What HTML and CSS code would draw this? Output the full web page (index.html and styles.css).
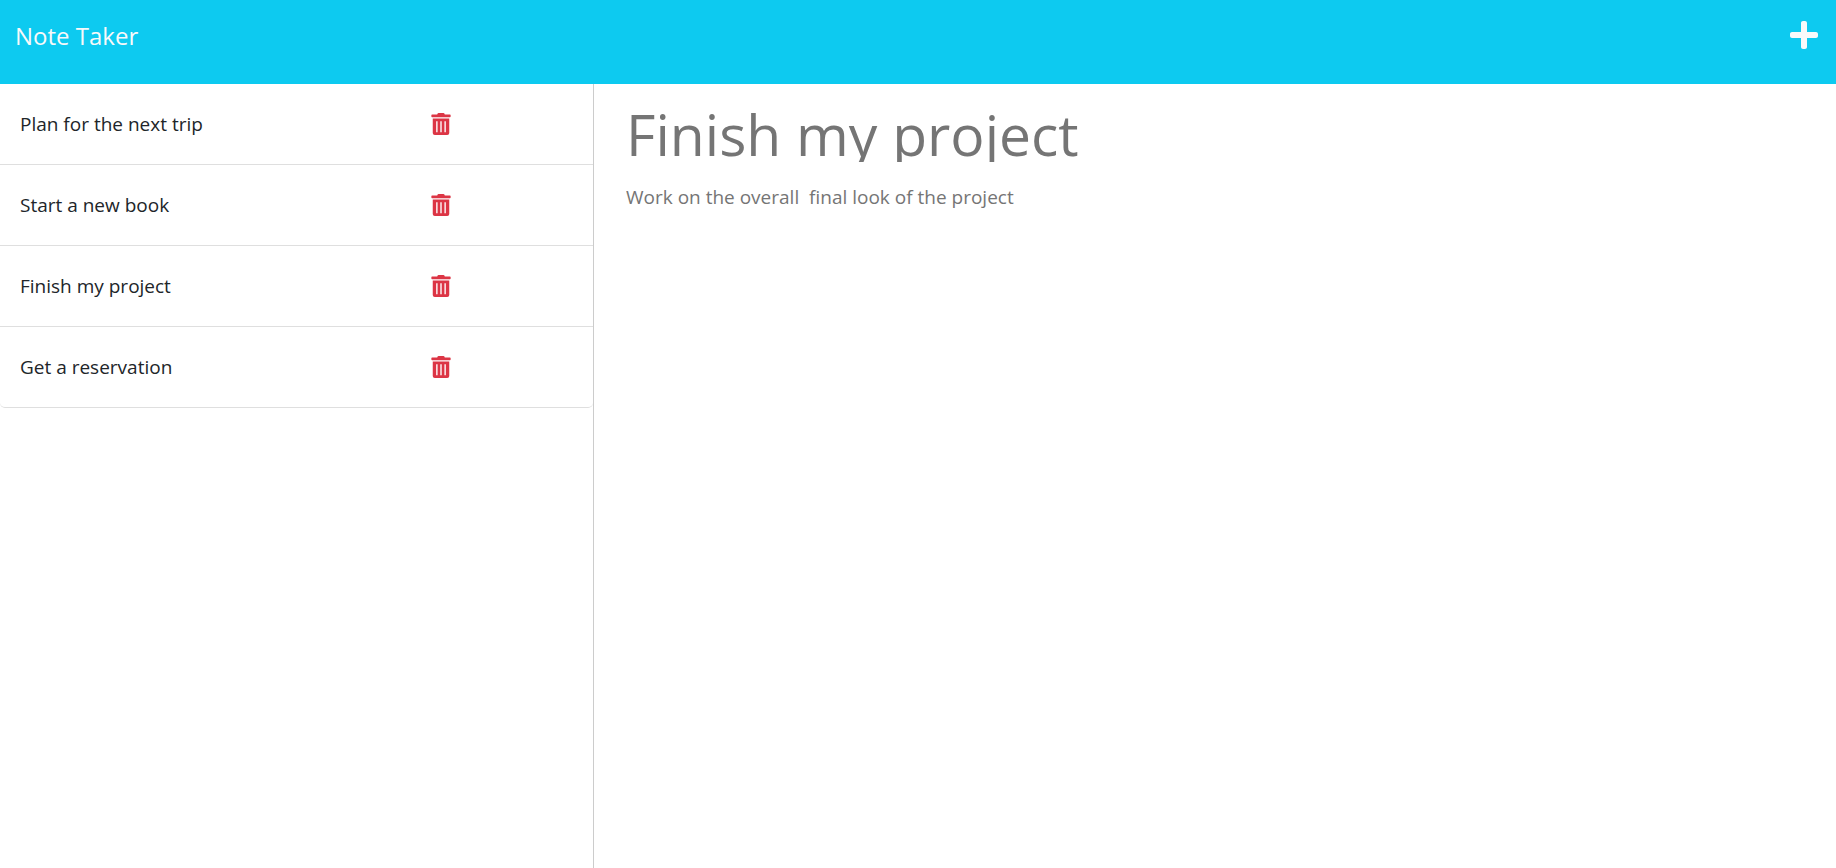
FILE: index.html
```html
<!DOCTYPE html>
<html lang="en">
<head>
<meta charset="utf-8">
<meta name="viewport" content="width=device-width, initial-scale=1">
<title>Note Taker</title>
<link rel="stylesheet" href="styles.css">
</head>
<body>
<svg class="sprite" aria-hidden="true">
  <symbol id="trash" viewBox="0 0 448 512">
    <path fill-rule="evenodd" d="M432 32H312l-9-19A24 24 0 0 0 281 0H167a24 24 0 0 0-22 13l-9 19H16A16 16 0 0 0 0 48v32a16 16 0 0 0 16 16h416a16 16 0 0 0 16-16V48a16 16 0 0 0-16-16ZM32 128v336a48 48 0 0 0 48 48h288a48 48 0 0 0 48-48V128ZM112 192h32v256h-32ZM208 192h32v256h-32ZM304 192h32v256h-32Z"/>
  </symbol>
</svg>
<header class="navbar">
  <a class="brand" href="#">Note Taker</a>
  <button class="icon-button" type="button" aria-label="New note">
    <svg class="plus" viewBox="0 0 448 512"><path d="M416 208H272V64c0-17.700-14.300-32-32-32h-32c-17.700 0-32 14.300-32 32v144H32c-17.700 0-32 14.300-32 32v32c0 17.700 14.300 32 32 32h144v144c0 17.700 14.300 32 32 32h32c17.700 0 32-14.300 32-32V304h144c17.700 0 32-14.300 32-32v-32c0-17.700-14.300-32-32-32z"/></svg>
  </button>
</header>
<main class="layout">
  <aside class="sidebar">
    <ul class="notes">
      <li class="note"><span>Plan for the next trip</span><button class="icon-button" type="button" aria-label="Delete Plan for the next trip"><svg class="trash"><use href="#trash"/></svg></button></li>
      <li class="note"><span>Start a new book</span><button class="icon-button" type="button" aria-label="Delete Start a new book"><svg class="trash"><use href="#trash"/></svg></button></li>
      <li class="note"><span>Finish my project</span><button class="icon-button" type="button" aria-label="Delete Finish my project"><svg class="trash"><use href="#trash"/></svg></button></li>
      <li class="note"><span>Get a reservation</span><button class="icon-button" type="button" aria-label="Delete Get a reservation"><svg class="trash"><use href="#trash"/></svg></button></li>
    </ul>
  </aside>
  <section class="editor">
    <input class="title" type="text" aria-label="Note title" value="Finish my project" readonly>
    <textarea class="text" aria-label="Note text" readonly>Work on the overall  final look of the project</textarea>
  </section>
</main>
</body>
</html>
```
FILE: styles.css
```css
* { box-sizing: border-box; }

body {
  margin: 0;
  min-height: 100vh;
  display: flex;
  flex-direction: column;
  font-family: "Segoe UI", "Open Sans", "Noto Sans", sans-serif;
  font-size: 19px;
  line-height: 30px;
  color: #212529;
  background: #fff;
}

.sprite { display: none; }

.navbar {
  display: flex;
  justify-content: space-between;
  align-items: flex-start;
  padding: 16px 16px 28px 15px;
  background: #0dcaf0;
  color: #f8f9fa;
}

.brand {
  font-size: 24px;
  line-height: 40px;
  color: inherit;
  text-decoration: none;
}

.icon-button {
  display: flex;
  padding: 0;
  border: 0;
  background: none;
  color: inherit;
  cursor: pointer;
}

.plus {
  width: 28px;
  height: 32px;
  margin: 3px 2px;
  fill: currentColor;
}

.layout {
  flex: 1;
  display: grid;
  grid-template-columns: calc(100% / 3 - 18px) 1fr;
}

.sidebar { border-right: 1px solid #ccc; }

.notes {
  list-style: none;
  margin: 0;
  padding: 0;
}

.note {
  display: grid;
  grid-template-columns: 1fr 142px;
  align-items: center;
  padding: 24px 20px;
  border-bottom: 1px solid #dfdfdf;
}

.note span { line-height: 32px; }

.note .icon-button { color: #dc3545; }

.note:last-child { border-radius: 0 0 5px 5px; }

.trash {
  width: 20px;
  height: 22px;
  fill: currentColor;
}

.editor {
  display: flex;
  flex-direction: column;
  gap: 20px;
  padding: 22px 32px;
}

.title,
.text {
  width: 100%;
  padding: 0;
  border: 0;
  outline: 0;
  background: none;
  font-family: inherit;
  color: #757575;
}

.title {
  height: 56px;
  font-size: 57px;
  line-height: 56px;
}

.text {
  flex: 1;
  resize: none;
  font-size: 19px;
  line-height: 30px;
}
```
